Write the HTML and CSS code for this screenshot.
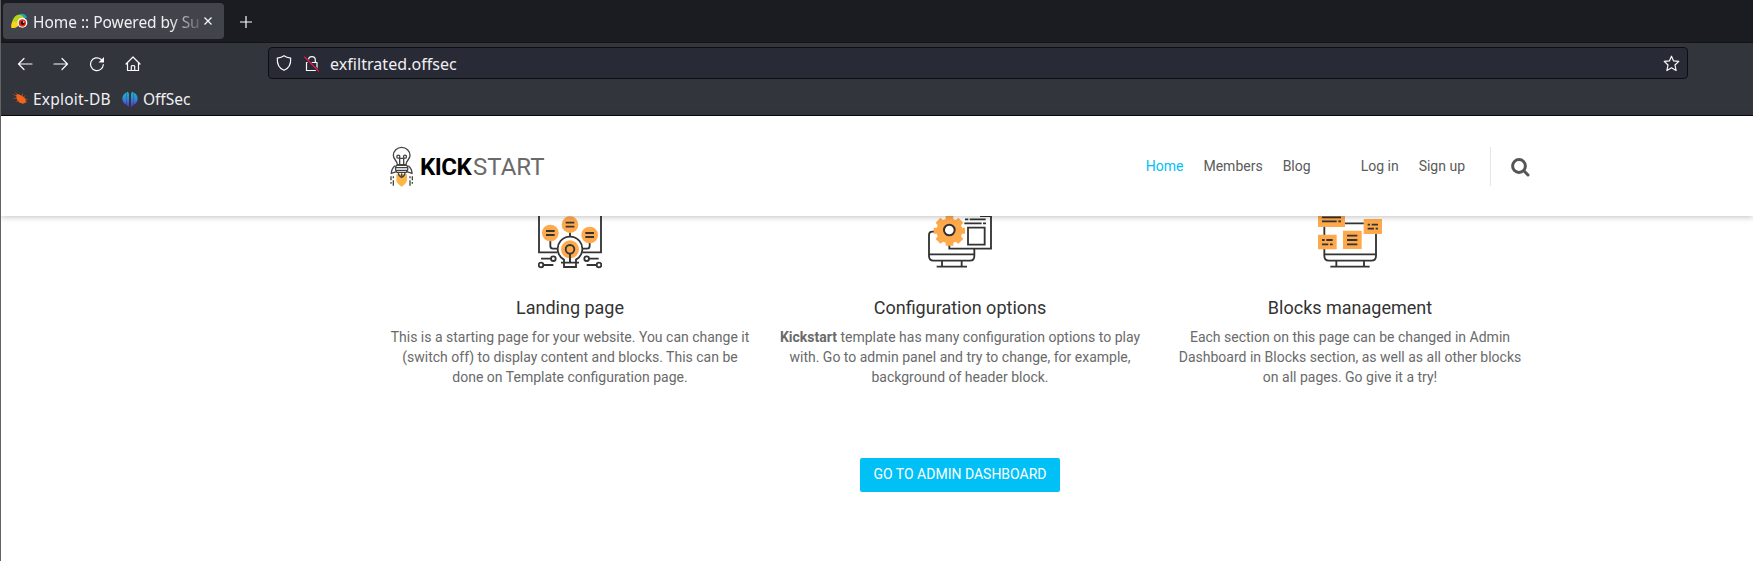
FILE: index.html
```html
<!DOCTYPE html>
<html lang="en">
<head>
<meta charset="utf-8">
<title>Home :: Powered by Subrion</title>
<link rel="stylesheet" href="styles.css">
</head>
<body>
<div class="window">
  <div class="tabstrip">
    <div class="tab">
      <svg class="favicon" width="17" height="16" viewBox="0 0 51 48">
        <path d="M18 10C24 0 44-2 48 14L40 16 22 14z" fill="#1ba5b8"/>
        <path d="M2 44C0 26 8 8 22 5c10-1 16 6 18 12L24 30C22 42 12 46 2 44z" fill="#b5d51d"/>
        <path d="M1 44C0 32 3 27 8 25c8 2 12 7 14 12C18 45 8 47 1 44z" fill="#ffd21a"/>
        <circle cx="34" cy="29" r="15" fill="#fff"/>
        <circle cx="34" cy="30" r="11" fill="#e32d18"/>
        <circle cx="35" cy="30" r="6" fill="#3a0d0c"/>
        <circle cx="38" cy="27" r="2.500" fill="#fff"/>
      </svg>
      <span class="tab-title">Home :: Powered by Sub</span>
      <svg class="tab-close" width="8" height="8" viewBox="0 0 8 8"><path d="M.5.5l7 7M7.500.5l-7 7" /></svg>
    </div>
    <svg class="new-tab" width="12" height="12" viewBox="0 0 12 12"><path d="M6 0v12M0 6h12"/></svg>
  </div>
  <div class="toolbar">
    <div class="nav-buttons">
      <svg width="16" height="16" viewBox="0 0 16 16"><path d="M15 8H1.500M7 2.500L1.500 8 7 13.500"/></svg>
      <svg width="16" height="16" viewBox="0 0 16 16"><path d="M1 8h13.500M9 2.500L14.500 8 9 13.500"/></svg>
      <svg width="16" height="16" viewBox="0 0 16 16"><path d="M14.300 8.500a6.400 6.400 0 1 1-2.300-5.200l1.800 1.800"/><path d="M15 1v5.500H9.500z" class="solid"/></svg>
      <svg width="16" height="16" viewBox="0 0 16 16"><path d="M1 8l7-7 7 7M2.500 7v7.500h11V7M6.300 14.500v-4.200c0-1 3.400-1 3.400 0v4.200"/></svg>
    </div>
    <div class="urlbar">
      <svg class="shield" width="16" height="16" viewBox="0 0 16 16"><path d="M8 .8c2 1.500 4 2 6.700 2.400C15 9 12.500 13.500 8 15.300 3.500 13.500 1 9 1.300 3.200 4 2.800 6 2.300 8 .8z"/></svg>
      <svg class="lock" width="16" height="17" viewBox="0 0 16 17"><path d="M2.500 7.500h10.500v8H2.500zM4.500 7.500V5a3.400 3.400 0 0 1 6.800 0v2.500"/><path class="halo" d="M.5 2.500l14 13.500"/><path class="slash" d="M.7 2l13.800 14"/></svg>
      <span class="url">exfiltrated.offsec</span>
      <svg class="star" width="17" height="17" viewBox="0 0 17 17"><path d="M8.500 1.200l2.100 4.700 5.200.5-3.800 3.600 1.100 5.500-4.600-2.700-4.600 2.700L5 10 1.200 6.400l5.200-.5z"/></svg>
    </div>
  </div>
  <div class="bookmarks">
    <svg width="15" height="13" viewBox="0 0 45 39"><path d="M9 9l6-3 12 5 8 6 4 7-1 8-8 3-10-3-8-8z" fill="#f26419"/><path d="M1 7l9 5M7 2l8 7M1 19h11M10 29l8-4M29 4l-2 9M36 10l-4 6M44 23l-7-2M43 31l-7-3" fill="none" stroke="#c9551f" stroke-width="2"/></svg>
    <span class="bookmark exploit">Exploit-DB</span>
    <svg width="16" height="16" viewBox="0 0 48 48">
      <defs><linearGradient id="os" x1="0" y1="0" x2="0" y2="1"><stop offset="0" stop-color="#19b5d0"/><stop offset=".5" stop-color="#3187d6"/><stop offset="1" stop-color="#5a2fc4"/></linearGradient></defs>
      <path d="M21 9v38L15 45V2q5 0 6 7zM27 9v38l6-2V2q-5 0-6 7zM14 4v38C6 38 1 31 1 23S5 8 14 4zM34 4v38c8-4 13-11 13-19S43 8 34 4z" fill="url(#os)"/>
    </svg>
    <span class="bookmark">OffSec</span>
  </div>

  <header class="site-header">
    <div class="container header-row">
      <a class="brand">
        <svg width="24" height="42" viewBox="0 0 72 126">
          <path d="M19 101V88h32v13q2 12-16 24-18-12-16-24z" fill="#ffb545"/>
          <g fill="none" stroke="#444" stroke-width="4">
            <path d="M22 59c0-13-12-15-12-28a25 24 0 0 1 50 0c0 13-12 15-12 28z"/>
            <path d="M29 58V38M41 58V38M29 40H41"/><circle cx="25" cy="35" r="4.500"/><circle cx="45" cy="35" r="4.500"/>
            <path d="M19 61h32M17 68h36M17 76h36M19 61c-4 8-4 14 2 21h28c6-7 6-13 2-21"/>
            <path d="M15 62C8 68 4 75 4 85l16-5M55 62c7 6 11 13 11 23l-16-5"/>
            <path d="M25 84q1 10 10 13 9-3 10-13M35 85v9"/>
            <path d="M3 94v12M10 94v6M67 94v12M60 94v6M3 111v5M10 106v16M67 111v5M60 106v16"/>
          </g>
        </svg>
        <span class="brand-text"><b>KICK</b><span>START</span></span>
      </a>
      <nav class="menu">
        <a class="active">Home</a><a>Members</a><a>Blog</a><a class="login">Log in</a><a>Sign up</a>
      </nav>
      <div class="search">
        <svg width="19" height="19" viewBox="0 0 19 19"><circle cx="8" cy="8" r="6.400"/><path d="M12.800 12.800l4.200 4.200" stroke-linecap="round"/></svg>
      </div>
    </div>
  </header>

  <main class="container">
    <div class="features">
      <section class="feature">
        <svg width="64" height="54" viewBox="54 33 192 162">
          <g class="ink">
            <path d="M57 33V142H112M243 33V142H187"/>
            <path d="M150 82v14M91 108v15q0 8 8 8h14M209 112v11q0 8-8 8h-14"/>
            <path d="M132 172v-8a37 37 0 1 1 36 0v8"/>
            <path d="M123 173h54M132 173v13h36v-13M150 146v26"/>
            <path d="M63 161h29M208 161h28M72 180h28M200 180h28"/>
            <circle cx="100" cy="161" r="7"/><circle cx="200" cy="161" r="7"/><circle cx="63" cy="180" r="7"/><circle cx="237" cy="180" r="7"/>
          </g>
          <g class="fill"><circle cx="91" cy="84" r="25"/><circle cx="150" cy="59" r="25"/><circle cx="209" cy="90" r="25"/><circle cx="150" cy="133" r="27"/></g>
          <g class="ink"><path d="M78 78h26M78 90h26M137 53h26M137 65h26M196 84h26M196 96h26M150 146v26"/><circle cx="150" cy="133" r="13"/></g>
        </svg>
        <h4>Landing page</h4>
        <p>This is a starting page for your website. You can change it (switch off) to display content and blocks. This can be done on Template configuration page.</p>
      </section>
      <section class="feature wide">
        <svg width="64" height="54" viewBox="54 33 192 162">
          <g class="ink">
            <path d="M75 80h-8q-10 0-10 10v63q0 14 14 14h109q13 0 13-14v-22M57 148h136M96 168v17M155 168v17M80 185h91"/>
            <path d="M118 118v13h125V33M210 33h33M165 43h10M179 43h48M163 55h52M219 55h9"/>
            <path d="M174 68h50v51h-50z"/>
          </g>
          <path class="fill" d="M107 33h23v9l7 3 8-7 15 15-7 8 3 7h9v18h-9l-3 8 7 8-15 14-8-6-7 3v9h-23v-9l-8-3-8 6-14-14 6-8-3-8h-9V68h9l3-7-6-8 14-15 8 7 8-3z"/>
          <circle cx="118" cy="75" r="16" fill="#fff" stroke="#333" stroke-width="6"/>
        </svg>
        <h4>Configuration options</h4>
        <p><b>Kickstart</b> template has many configuration options to play with. Go to admin panel and try to change, for example, background of header block.</p>
      </section>
      <section class="feature">
        <svg width="64" height="54" viewBox="54 33 192 162">
          <g class="ink"><path d="M73 65v88q0 14 14 14h127q14 0 14-14V87M73 148h155M134 55h58M109 168v17M192 168v17M91 185h118"/></g>
          <path class="fill" d="M54 33h81v33H54zM54 89h56v44H54zM129 77h56v55h-56zM191 42h55v45h-55z"/>
          <g class="ink"><path d="M66 37h57M66 49h44M115 49h8M66 105h8M79 105h19M66 118h19M90 118h8M141 92h31M141 105h31M141 118h31M203 59h7M215 59h19M203 71h19M227 71h7"/></g>
        </svg>
        <h4>Blocks management</h4>
        <p>Each section on this page can be changed in Admin Dashboard in Blocks section, as well as all other blocks on all pages. Go give it a try!</p>
      </section>
    </div>
    <div class="action"><a class="button">GO TO ADMIN DASHBOARD</a></div>
  </main>
</div>
</body>
</html>
```
FILE: styles.css
```css
* { box-sizing: border-box; }
body { margin: 0; background: #fff; font-family: Roboto, sans-serif; font-size: 14px; line-height: 20px; color: #6a6a6a; overflow: hidden; }
.window { height: 561px; border-left: 1px solid #626262; overflow: hidden; }

.tabstrip { height: 43px; background: #1b1c21; display: flex; align-items: flex-start; padding: 3px 0 0 2px; border-bottom: 1px solid #131418; }
.tab { width: 221px; height: 36px; border-radius: 4px; background: #42444b; display: flex; align-items: center; padding: 0 12px 0 8px; color: #f0f0f3; font-family: "Noto Sans", sans-serif; font-size: 15.5px; }
.favicon { flex: none; }
.tab-title { width: 168px; margin-left: 5px; padding-top: 1px; letter-spacing: -.04px; overflow: hidden; white-space: nowrap; -webkit-mask-image: linear-gradient(to right, #000 136px, transparent 174px); mask-image: linear-gradient(to right, #000 136px, transparent 174px); }
.tab-close { margin-left: 3px; flex: none; }
.new-tab { margin: 13px 0 0 16px; }
.tab-close, .new-tab { fill: none; stroke: #fbfbfe; stroke-width: 1.2; }

.toolbar { height: 40px; background: #33353d; display: flex; align-items: flex-start; padding: 4px 65px 0 16px; }
.nav-buttons { display: flex; gap: 20px; padding-top: 9px; width: 251px; flex: none; }
.nav-buttons svg, .shield, .lock, .star { fill: none; stroke: #fbfbfe; stroke-width: 1.2; stroke-linejoin: round; stroke-linecap: round; flex: none; }
.nav-buttons .solid { fill: #fbfbfe; stroke: none; }
.urlbar { flex: 1; height: 32px; background: #282a35; border: 1px solid #0d0e12; border-radius: 4px; display: flex; align-items: center; padding: 0 7px; }
.lock { margin-left: 12px; }
.lock .halo { stroke: #282a35; stroke-width: 3; }
.lock .slash { stroke: #e2194d; }
.url { flex: 1; margin-left: 10px; padding-top: 1px; color: #f0f0f3; font-family: "Noto Sans", sans-serif; font-size: 16px; letter-spacing: .05px; }

.bookmarks { height: 33px; background: #33353d; border-bottom: 1px solid #0b0b10; display: flex; align-items: center; padding: 0 0 1px 12px; color: #f0f0f3; font-family: "Noto Sans", sans-serif; font-size: 15.5px; }
.bookmarks svg { flex: none; }
.bookmark { margin-left: 5px; padding-top: 1px; }
.exploit { width: 79px; margin-right: 10px; white-space: nowrap; letter-spacing: .2px; }

.container { width: 1170px; margin-left: 374px; padding: 0 15px; }
.site-header { position: relative; z-index: 2; height: 100px; background: #fff; box-shadow: 0 1px 6px rgba(0, 0, 0, .25); }
.header-row { height: 100px; display: flex; align-items: center; }
.brand { display: flex; align-items: center; }
.brand-text { margin-left: 6px; padding-top: 2px; font-size: 24px; line-height: 28px; color: #6a6a6a; display: flex; }
.brand-text b { color: #000; width: 53px; letter-spacing: -.5px; }
.brand-text span { letter-spacing: 0; }
.menu { margin-left: auto; display: flex; gap: 20px; color: #5a5a5a; }
.menu .active { color: #00c0f6; }
.menu .login { margin-left: 30px; }
.search { margin-left: 25px; height: 39px; border-left: 1px solid #e7e7e7; padding: 11px 0 0 20px; width: 40px; }
.search svg { display: block; fill: none; stroke: #555; stroke-width: 3; }

.features { display: flex; margin: 0 -15px; }
.feature { width: 390px; padding: 0 15px; text-align: center; }
.feature.wide { padding: 0 12px; }
.feature svg { display: block; margin: 0 auto; }
.ink { fill: none; stroke: #333; stroke-width: 5.5; }
.fill { fill: #ffa94d; }
.feature h4 { margin: 28px 0 9px; font-size: 18px; line-height: 20px; font-weight: 400; color: #333; }
.feature p { margin: 0; }
.action { margin-top: 71px; display: flex; justify-content: center; }
.button { width: 200px; height: 34px; border-radius: 2px; background: #00c0f6; color: #fff; text-align: center; line-height: 32px; white-space: nowrap; }
```
